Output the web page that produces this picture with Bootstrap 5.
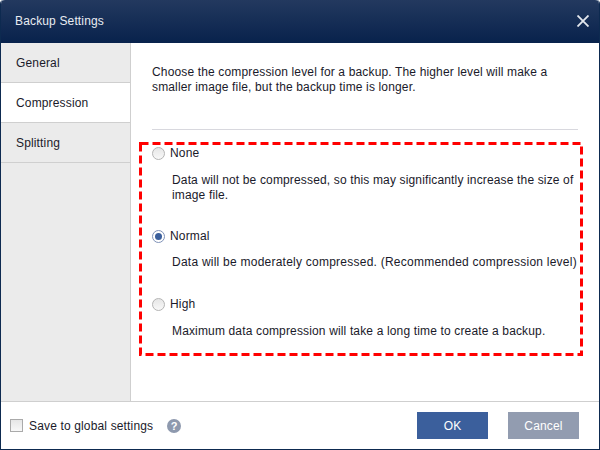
<!DOCTYPE html>
<html lang="en">
  <head>
    <meta charset="UTF-8" />
    <title>Backup Settings</title>
    <link href="https://cdn.jsdelivr.net/npm/bootstrap@5.3.3/dist/css/bootstrap.min.css" rel="stylesheet" />
    <style>
      html, body { height: 100%; }
      body {
        font-family: "Liberation Sans", Arial, sans-serif;
        font-size: 12px;
        letter-spacing: 0.15px;
        color: #1a1a2a;
        background: #fff;
        overflow: hidden;
      }
      .dlg-window {
        width: 600px;
        height: 450px;
        border: 1px solid #0d2a50;
        border-top: 0;
        border-radius: 4px 4px 0 0;
        background: #fff;
      }
      .dlg-title {
        height: 43px;
        padding: 0 10px 2px 14px;
        background: linear-gradient(#23395f, #08224c);
        color: #e8ecf2;
        border-radius: 4px 4px 0 0;
      }
      .dlg-close { width: 12px; height: 12px; }
      .dlg-main { height: 358px; }
      .dlg-side {
        width: 130px;
        background: #ebebeb;
        border-right: 1px solid #cfcfcf;
      }
      .side-tab {
        height: 40px;
        padding: 0 15px;
        border-bottom: 1px solid #cfcfcf;
      }
      .side-tab.on { background: #fff; }
      .dlg-pane { padding: 0 0 0 8px; }
      .pane-intro {
        height: 87px;
        margin: 0 21px 0 13px;
        padding-top: 22px;
        line-height: 15px;
        border-bottom: 1px solid #d8d8de;
      }
      .pane-intro p { margin: 0; }
      .level-box {
        position: relative;
        width: 444px;
        height: 214px;
        margin-top: 12px;
        padding: 1px 0 0 13px;
      }
      .level-frame { position: absolute; top: 0; left: 0; }
      .level-row { height: 20px; }
      .level-dot {
        width: 13px;
        height: 13px;
        margin-right: 5px;
        border-radius: 50%;
        border: 1px solid #b4b4b4;
        background: linear-gradient(#e6e6e6, #f8f8f8);
      }
      .level-dot.on {
        border-color: #7f92b8;
        background: #fff;
        padding: 2px;
      }
      .level-dot.on::before {
        content: "";
        display: block;
        width: 7px;
        height: 7px;
        border-radius: 50%;
        background: #3b5f9c;
      }
      .level-note {
        margin: 10px 0 0 20px;
        line-height: 15px;
        white-space: nowrap;
      }
      .note-wide {
        margin-top: 9px;
        letter-spacing: 0.24px;
      }
      .gap-normal { margin-top: 23px; }
      .gap-high { margin-top: 24px; }
      .dlg-foot {
        height: 48px;
        border-top: 1px solid #cfcfcf;
        padding: 0 20px 0 9px;
      }
      .save-box {
        width: 13px;
        height: 13px;
        margin-right: 6px;
        border: 1px solid #aaa;
        background: linear-gradient(#e6e6e6, #f8f8f8);
      }
      .help-dot {
        width: 14px;
        height: 14px;
        margin: 1px 0 0 14px;
        border-radius: 50%;
        background: #8e99ae;
        color: #fff;
        font-size: 11px;
        font-weight: 700;
        line-height: 14px;
        text-align: center;
      }
      .foot-btn {
        width: 71px;
        height: 27px;
        padding: 0;
        border: 0;
        border-radius: 0;
        color: #fff;
        font-size: 12px;
        letter-spacing: 0.15px;
      }
      .foot-ok { background: #3b5f9c; margin-right: 20px; }
      .foot-cancel { background: #929cb0; }
    </style>
  </head>
  <body>
    <div class="dlg-window d-flex flex-column">
      <div class="dlg-title d-flex align-items-center justify-content-between">
        <span>Backup Settings</span>
        <svg class="dlg-close" viewBox="0 0 12 12"><path d="M0.5 0.5 11.5 11.5M11.5 0.5 0.5 11.5" stroke="#e4e8ee" stroke-width="1.8" fill="none" /></svg>
      </div>
      <div class="dlg-main d-flex">
        <div class="dlg-side">
          <div class="side-tab d-flex align-items-center">General</div>
          <div class="side-tab on d-flex align-items-center">Compression</div>
          <div class="side-tab d-flex align-items-center">Splitting</div>
        </div>
        <div class="dlg-pane flex-grow-1">
          <div class="pane-intro">
            <p>Choose the compression level for a backup. The higher level will make a<br />smaller image file, but the backup time is longer.</p>
          </div>
          <div class="level-box">
            <svg class="level-frame" width="444" height="214"><rect x="1.5" y="1.5" width="441" height="211" fill="none" stroke="#f00" stroke-width="3" stroke-dasharray="8 4" /></svg>
            <div class="level-row d-flex align-items-center"><span class="level-dot"></span>None</div>
            <p class="level-note">Data will not be compressed, so this may significantly increase the size of<br />image file.</p>
            <div class="level-row gap-normal d-flex align-items-center"><span class="level-dot on"></span>Normal</div>
            <p class="level-note note-wide">Data will be moderately compressed. (Recommended compression level)</p>
            <div class="level-row gap-high d-flex align-items-center"><span class="level-dot"></span>High</div>
            <p class="level-note">Maximum data compression will take a long time to create a backup.</p>
          </div>
        </div>
      </div>
      <div class="dlg-foot d-flex align-items-center">
        <span class="save-box"></span>
        <span>Save to global settings</span>
        <span class="help-dot">?</span>
        <button type="button" class="btn foot-btn foot-ok ms-auto">OK</button>
        <button type="button" class="btn foot-btn foot-cancel">Cancel</button>
      </div>
    </div>
    <script src="https://cdn.jsdelivr.net/npm/bootstrap@5.3.3/dist/js/bootstrap.bundle.min.js"></script>
  </body>
</html>
